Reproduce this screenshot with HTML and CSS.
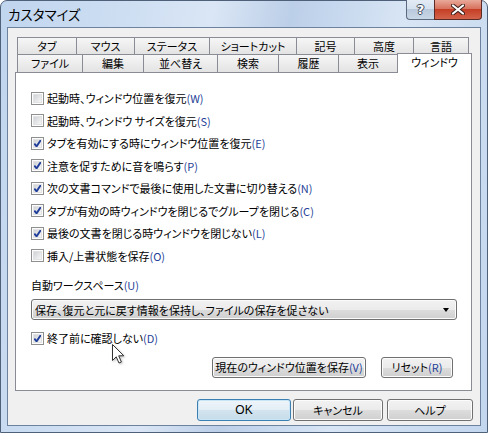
FILE: index.html
```html
<!DOCTYPE html>
<html lang="ja">
<head>
  <meta charset="UTF-8">
  <title>カスタマイズ</title>
  <link rel="stylesheet" href="styles.css">
</head>
<body>

<div class="window">
  <!-- TITLE BAR -->
  <div class="titlebar">
    <span class="title">カスタマイズ</span>
  </div>
  <div class="caption-buttons">
    <span class="cap-btn help-btn">?</span>
    <span class="cap-btn close-btn">
      <svg width="14" height="11" viewBox="0 0 14 11">
        <path d="M2 1.5 L12 9.5 M12 1.5 L2 9.5" stroke="#3b1d1a" stroke-width="4" stroke-linecap="round"/>
        <path d="M2 1.5 L12 9.5 M12 1.5 L2 9.5" stroke="#fff" stroke-width="2.2" stroke-linecap="round"/>
      </svg>
    </span>
  </div>

  <div class="client">
    <!-- TABS -->
    <div class="tabs">
      <div class="tab-row row-top">
        <div class="tab">タブ</div>
        <div class="tab">マウス</div>
        <div class="tab">ステータス</div>
        <div class="tab">ショートカット</div>
        <div class="tab">記号</div>
        <div class="tab">高度</div>
        <div class="tab">言語</div>
      </div>
      <div class="tab-row row-bottom">
        <div class="tab">ファイル</div>
        <div class="tab">編集</div>
        <div class="tab">並べ替え</div>
        <div class="tab">検索</div>
        <div class="tab">履歴</div>
        <div class="tab">表示</div>
        <div class="tab selected">ウィンドウ</div>
      </div>
    </div>

    <!-- WINDOW PAGE -->
    <div class="panel">
      <div class="check"><span class="box"></span>起動時、ウィンドウ位置を復元<span class="acc">(W)</span></div>
      <div class="check"><span class="box"></span>起動時、ウィンドウ サイズを復元<span class="acc">(S)</span></div>
      <div class="check"><span class="box checked"></span>タブを有効にする時にウィンドウ位置を復元<span class="acc">(E)</span></div>
      <div class="check"><span class="box checked"></span>注意を促すために音を鳴らす<span class="acc">(P)</span></div>
      <div class="check"><span class="box checked"></span>次の文書コマンドで最後に使用した文書に切り替える<span class="acc">(N)</span></div>
      <div class="check"><span class="box checked"></span>タブが有効の時ウィンドウを閉じるでグループを閉じる<span class="acc">(C)</span></div>
      <div class="check"><span class="box checked"></span>最後の文書を閉じる時ウィンドウを閉じない<span class="acc">(L)</span></div>
      <div class="check"><span class="box"></span>挿入/上書状態を保存<span class="acc">(O)</span></div>

      <div class="field-label">自動ワークスペース<span class="acc">(U)</span></div>
      <div class="combo">
        <span>保存、復元と元に戻す情報を保持し、ファイルの保存を促さない</span>
        <span class="combo-arrow"></span>
      </div>

      <div class="check check-last"><span class="box checked"></span>終了前に確認しない<span class="acc">(D)</span></div>

      <div class="panel-buttons">
        <span class="btn btn-save">現在のウィンドウ位置を保存<span class="acc">(V)</span></span>
        <span class="btn btn-reset">リセット<span class="acc">(R)</span></span>
      </div>
    </div>

    <!-- DIALOG BUTTONS -->
    <div class="dialog-buttons">
      <span class="btn btn-ok">OK</span>
      <span class="btn btn-cancel">キャンセル</span>
      <span class="btn btn-help">ヘルプ</span>
    </div>
  </div>

  <!-- mouse pointer -->
  <svg class="pointer" width="14" height="22" viewBox="0 0 14 22">
    <path d="M1.5 1.5 L1.5 17.5 L5.2 13.8 L8 20 L10.4 19 L7.7 12.8 L12.8 12.8 Z" fill="#fff" stroke="#333" stroke-width="1" stroke-linejoin="round"/>
  </svg>
</div>

</body>
</html>
```

FILE: styles.css
```css
body {
  margin: 0;
  background: #ffffff;
  width: 488px;
  height: 433px;
  overflow: hidden;
}

.window {
  position: relative;
  width: 488px;
  height: 433px;
  box-sizing: border-box;
  border: 1px solid #4f6079;
  border-radius: 7px 7px 0 0;
  background: linear-gradient(100deg, #c0d5ee 0%, #cddef2 22%, #dae6f5 38%, #bccfe8 52%, #c6d8ee 60%, #d8e5f4 72%, #c2d6ee 100%);
  display: flex;
  flex-direction: column;
  font-family: "Noto Sans CJK JP", "Noto Sans", sans-serif;
  font-size: 11px;
  font-feature-settings: "palt";
  color: #000;
}

.titlebar {
  height: 26px;
  display: flex;
  align-items: center;
  padding-left: 7px;
}

.title {
  font-size: 13.5px;
  color: #000;
  margin-top: -1px;
}

.caption-buttons {
  position: absolute;
  top: -1px;
  right: 5px;
  display: flex;
}

.cap-btn {
  height: 20px;
  box-sizing: border-box;
  border: 1px solid #5b6a80;
  border-top: none;
  display: flex;
  align-items: center;
  justify-content: center;
}

.help-btn {
  width: 28px;
  border-radius: 0 0 0 4px;
  border-right: none;
  background: linear-gradient(#e3ebf5 0%, #d5e1ee 45%, #b9c9dc 50%, #c9d7e6 100%);
  color: #fff;
  font-family: "DejaVu Sans", sans-serif;
  font-weight: bold;
  font-size: 13px;
  text-shadow: 1px 0 0 #3a4656, -1px 0 0 #3a4656, 0 1px 0 #3a4656, 0 -1px 0 #3a4656;
}

.close-btn {
  width: 48px;
  border-radius: 0 0 4px 0;
  border-color: #5d2b25;
  background: linear-gradient(#e9a99a 0%, #d8735f 45%, #c53f26 50%, #d2634a 100%);
}

.client {
  flex: 1;
  margin: 0 6px 6px 6px;
  border: 1px solid #6d829f;
  background: #f0f0f0;
  display: flex;
  flex-direction: column;
}

/* tab strip */
.tabs {
  margin: 9px 0 0 9px;
}

.tab-row {
  display: flex;
  align-items: flex-start;
}

.row-top {
  height: 17px;
}

.row-bottom {
  height: 18px;
}

.tab {
  box-sizing: border-box;
  height: 100%;
  border: 1px solid #898c95;
  border-bottom: none;
  margin-left: -1px;
  background: linear-gradient(#f6f6f6, #e3e3e3);
  text-align: center;
  line-height: 16px;
}

.tab:first-child {
  margin-left: 0;
}

.row-top .tab:nth-child(1) { width: 60px; }
.row-top .tab:nth-child(2) { width: 59px; }
.row-top .tab:nth-child(3) { width: 76px; }
.row-top .tab:nth-child(4) { width: 88px; }
.row-top .tab:nth-child(5) { width: 59px; }
.row-top .tab:nth-child(6) { width: 60px; }
.row-top .tab:nth-child(7) { width: 56px; }

.row-bottom .tab:nth-child(1) { width: 66px; }
.row-bottom .tab:nth-child(2) { width: 62px; }
.row-bottom .tab:nth-child(3) { width: 75px; }
.row-bottom .tab:nth-child(4) { width: 62px; }
.row-bottom .tab:nth-child(5) { width: 61px; }
.row-bottom .tab:nth-child(6) { width: 60px; }

.tab.selected {
  width: 75px;
  height: 20px;
  margin-top: -1px;
  background: #ffffff;
  position: relative;
  z-index: 1;
  line-height: 17px;
}

/* page contents */
.panel {
  margin: 0 8px 0 7px;
  height: 319px;
  box-sizing: border-box;
  border: 1px solid #898c95;
  background: #ffffff;
  padding: 14px 14px 0 15px;
  display: flex;
  flex-direction: column;
}

.check {
  height: 22.5px;
  display: flex;
  align-items: center;
  white-space: nowrap;
}

.box {
  width: 13px;
  height: 13px;
  box-sizing: border-box;
  border: 1px solid #8e8f8f;
  margin-right: 3px;
  flex: none;
  background:
    linear-gradient(135deg, #cfd2d6, #f6f6f6) 2px 2px / 7px 7px no-repeat,
    #f4f4f4;
  box-shadow: inset 0 0 0 1px #fdfdfd, inset 0 0 0 2px #e2e2e2;
}

.box.checked {
  background:
    url("data:image/svg+xml,%3Csvg xmlns='http://www.w3.org/2000/svg' width='11' height='11'%3E%3Cpath d='M2.3 5.6 L4.6 8.4 L9 1.8' fill='none' stroke='%23213f9a' stroke-width='1.9'/%3E%3C/svg%3E") center / 11px 11px no-repeat,
    linear-gradient(135deg, #cfd2d6, #f6f6f6) 2px 2px / 7px 7px no-repeat,
    #f4f4f4;
}

.acc {
  color: #1f3f98;
}

.field-label {
  margin-top: 10px;
  line-height: 16px;
}

.combo {
  margin-top: 6px;
  height: 21px;
  box-sizing: border-box;
  border: 1px solid #707070;
  border-radius: 3px;
  background: linear-gradient(#f2f2f2 0%, #ebebeb 50%, #dddddd 51%, #cfcfcf 100%);
  box-shadow: inset 0 0 0 1px #fbfbfb;
  display: flex;
  align-items: center;
  justify-content: space-between;
  padding: 0 7px 0 3px;
  white-space: nowrap;
}

.combo-arrow {
  width: 0;
  height: 0;
  border-left: 3.5px solid transparent;
  border-right: 3.5px solid transparent;
  border-top: 4px solid #000;
}

.check-last {
  margin-top: 7px;
}

.panel-buttons {
  margin-top: 7px;
  display: flex;
  justify-content: flex-end;
  gap: 15px;
  padding-right: 4px;
}

.btn {
  height: 21px;
  box-sizing: border-box;
  border: 1px solid #707070;
  border-radius: 3px;
  background: linear-gradient(#f2f2f2 0%, #ebebeb 50%, #dddddd 51%, #cfcfcf 100%);
  box-shadow: inset 0 0 0 1px #fcfcfc;
  display: flex;
  align-items: center;
  justify-content: center;
  white-space: nowrap;
}

.btn-save {
  width: 154px;
}

.btn-reset {
  width: 72px;
}

.dialog-buttons {
  margin-top: 8px;
  display: flex;
  justify-content: flex-end;
  padding-right: 7px;
}

.dialog-buttons .btn {
  height: 22px;
}

.btn-ok {
  width: 94px;
  margin-right: 2px;
  border-color: #3c7fb1;
  background: linear-gradient(#eef5fa 0%, #e3eef6 50%, #d3e4ef 51%, #c6dcea 100%);
  box-shadow: inset 0 0 0 1px #c8e6f7;
  font-family: "Liberation Sans", sans-serif;
  font-size: 12px;
}

.btn-cancel {
  width: 90px;
  margin-right: 4px;
}

.btn-help {
  width: 86px;
}

.pointer {
  position: absolute;
  left: 110px;
  top: 342px;
  filter: drop-shadow(1px 1px 1px rgba(0, 0, 0, 0.25));
}
```
